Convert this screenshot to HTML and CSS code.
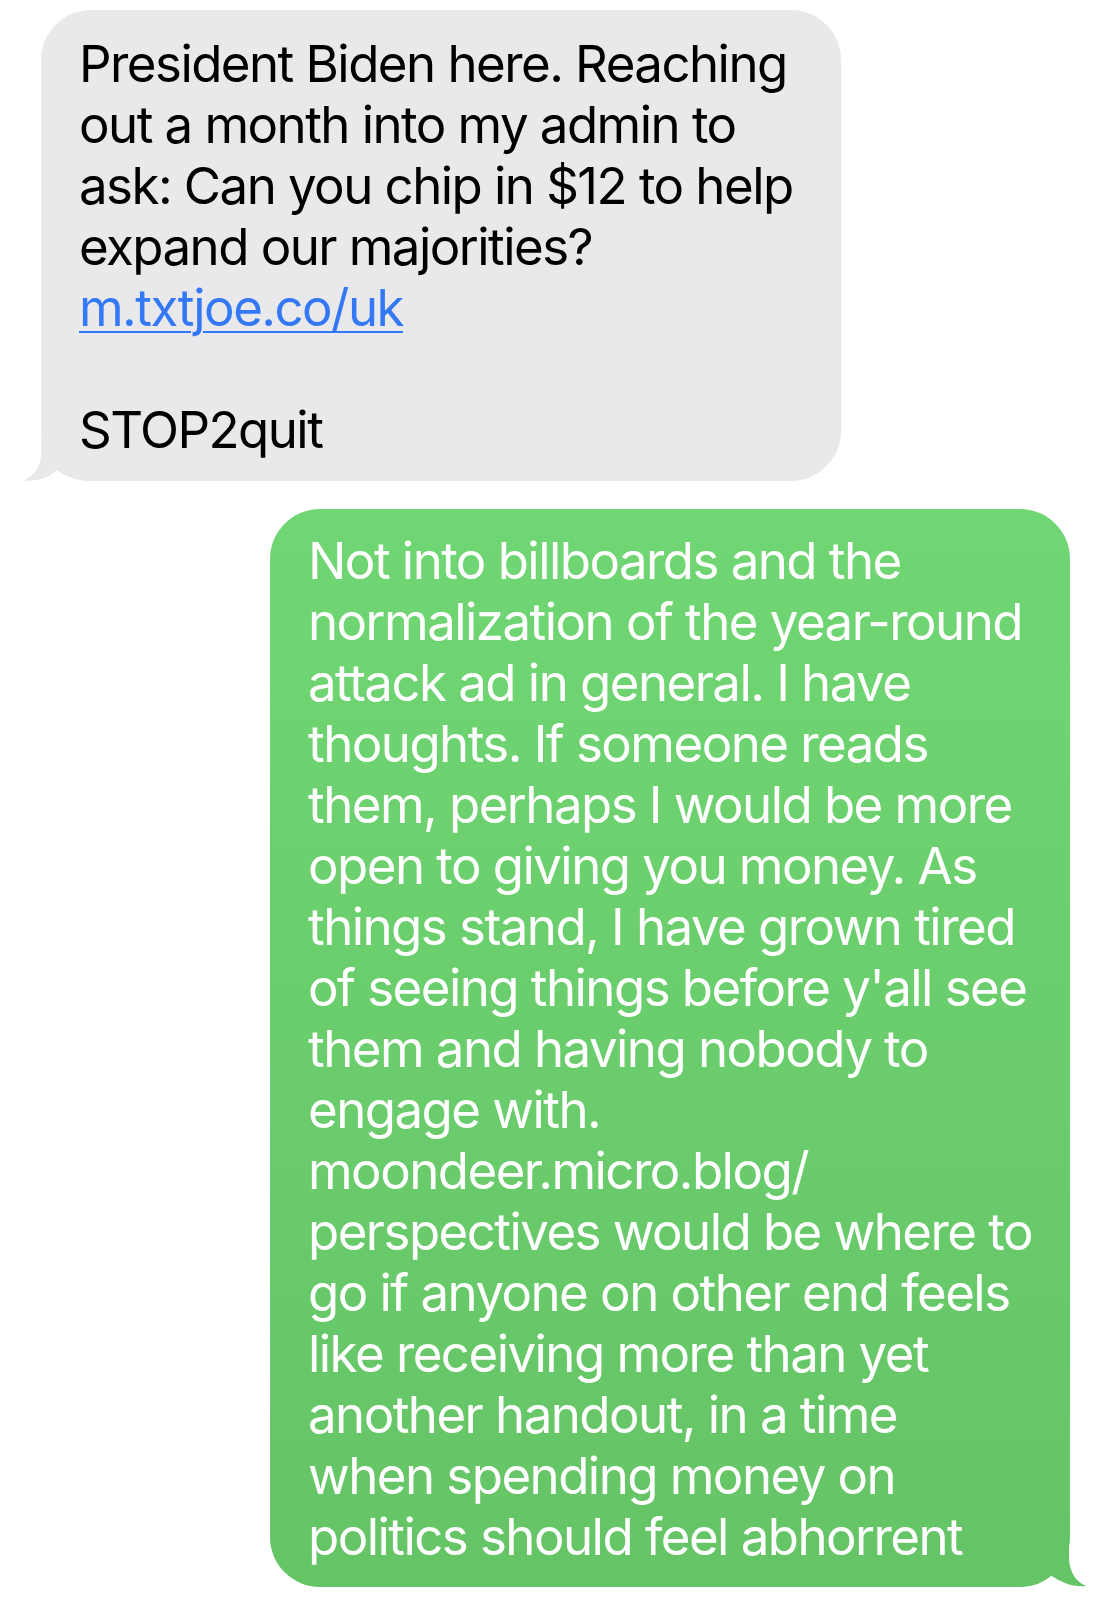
FILE: index.html
```html
<!DOCTYPE html>
<html>
<head>
<meta charset="utf-8">
<link rel="stylesheet" href="styles.css">
</head>
<body>
<div class="thread">
  <div class="bubble received">
    <svg class="tail tail-left" width="66" height="41" viewBox="0 0 66 41"><path d="M17,0 L17,14 C17,27 10,35 0,40.5 C10,41.5 21,39 28,34 L33,30 C41,36 51,40.5 66,41 L66,0 Z"/></svg>
    <p class="text">President Biden here. Reaching<br>out a month into my admin to<br>ask: Can you chip in $12 to help<br>expand our majorities?<br><a class="link" href="#">m.txtjoe.co/uk</a><br><br>STOP2quit</p>
  </div>
  <div class="bubble sent">
    <svg class="tail tail-right" width="67" height="43" viewBox="0 0 67 43"><path d="M50,0 L50,15 C51,30 58,38 67,42 C55,43.5 42,39 30,30 C23,37 12,42 0,42 L0,0 Z"/></svg>
    <p class="text">Not into billboards and the<br>normalization of the year-round<br>attack ad in general. I have<br>thoughts. If someone reads<br>them, perhaps I would be more<br>open to giving you money. As<br>things stand, I have grown tired<br>of seeing things before y'all see<br>them and having nobody to<br>engage with.<br>moondeer.micro.blog/<br>perspectives would be where to<br>go if anyone on other end feels<br>like receiving more than yet<br>another handout, in a time<br>when spending money on<br>politics should feel abhorrent</p>
  </div>
</div>
</body>
</html>
```

FILE: styles.css
```css
html, body {
  margin: 0;
  padding: 0;
  background: #ffffff;
}

.thread {
  display: flex;
  flex-direction: column;
  gap: 28px;
  padding-top: 10px;
  width: 1119px;
}

.bubble {
  position: relative;
  box-sizing: border-box;
  border-radius: 50px;
  width: 800px;
}

.text {
  position: relative;
  z-index: 1;
  margin: 0;
  font-family: "Inter", "Liberation Sans", sans-serif;
  font-size: 51px;
  line-height: 61px;
  letter-spacing: -1.55px;
  white-space: nowrap;
}

.received {
  margin-left: 41px;
  background: #e9e9eb;
  padding: 23px 20px 21px 38px;
  color: #000000;
}

.sent {
  margin-left: 270px;
  background: linear-gradient(180deg, #70d673 0%, #65c466 100%);
  padding: 21px 20px 20px 38px;
  color: #ffffff;
}

.link {
  color: #3478f6;
  text-decoration: underline;
  text-decoration-thickness: 2px;
  text-underline-offset: 5px;
}

.tail {
  position: absolute;
  bottom: 0;
  z-index: 0;
}

.tail-left {
  left: -17px;
  fill: #e9e9eb;
}

.tail-right {
  right: -16px;
  fill: #65c466;
}
```
